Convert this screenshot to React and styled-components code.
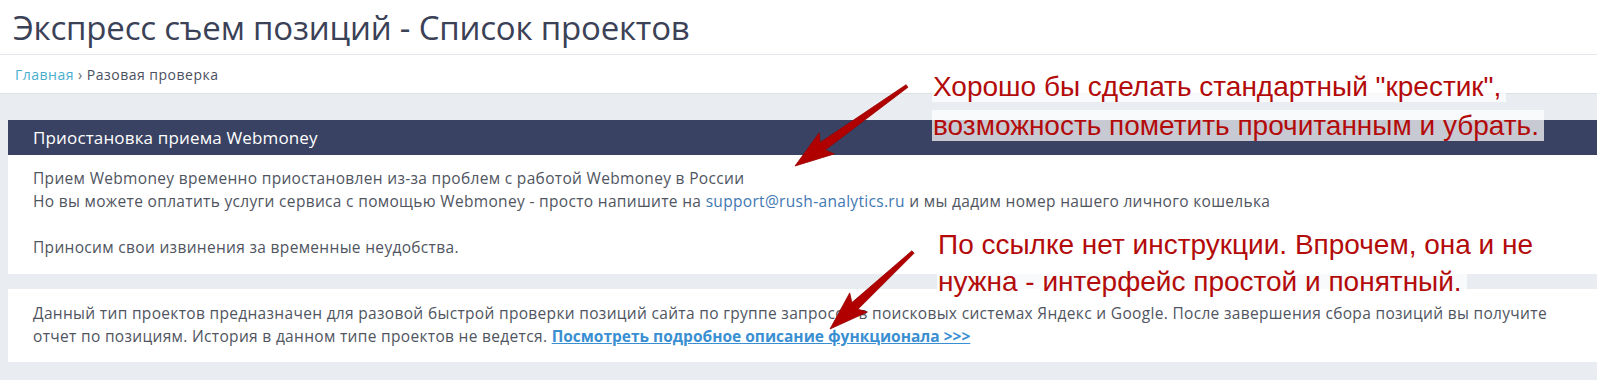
import React from 'react';
import styled, { createGlobalStyle } from 'styled-components';

const GlobalStyle = createGlobalStyle`
  body {
    margin: 0;
    background: #e9ecf1;
    font-family: 'Open Sans', 'Noto Sans', sans-serif;
    overflow: hidden;
  }
`;

const Page = styled.div`
  position: relative;
  width: 1597px;
  height: 380px;
  overflow: hidden;
`;

const TitleBar = styled.header`
  background: #fff;
  height: 54px;
  padding-left: 13px;
  border-bottom: 1px solid #e4e7eb;
  display: flex;
  align-items: center;
`;

const Title = styled.h1`
  margin: 0;
  font-size: 33px;
  font-weight: 400;
  color: #3b4156;
  letter-spacing: -0.2px;
`;

const Breadcrumbs = styled.nav`
  background: #fff;
  height: 38px;
  padding-left: 15px;
  display: flex;
  align-items: center;
  font-size: 14px;
  letter-spacing: 0.5px;
  color: #4b5060;
  border-bottom: 1px solid #dde1e6;
`;

const Crumb = styled.a`
  color: #48aed0;
  text-decoration: none;
`;

const Sep = styled.span`
  margin: 0 4px;
  color: #666;
`;

const Content = styled.main`
  padding: 26px 0 0 8px;
  display: flex;
  flex-direction: column;
  gap: 15px;
`;

const Card = styled.section`
  background: #fff;
`;

const CardHead = styled.div`
  background: #394262;
  color: #fff;
  height: 35px;
  padding-left: 25px;
  display: flex;
  align-items: center;
  font-size: 17px;
  letter-spacing: 0.15px;
`;

const CardBody = styled.div`
  padding: ${(p) => p.$pad || '12px 17px 15px 25px'};
  font-size: 15.5px;
  letter-spacing: 0.32px;
  line-height: 23px;
  color: #50555f;
`;

const Para = styled.p`
  margin: 0;
  max-width: ${(p) => p.$max || 'none'};
`;

const Gap = styled.div`
  height: 23px;
`;

const Mail = styled.a`
  color: #3f78b3;
  text-decoration: none;
`;

const MoreLink = styled.a`
  color: #3a8fd2;
  font-weight: 700;
  letter-spacing: 0;
  text-decoration: underline;
`;

const Note = styled.div`
  position: absolute;
  left: ${(p) => p.$x}px;
  top: ${(p) => p.$y}px;
  font-family: 'Liberation Sans', Arial, sans-serif;
  font-size: 28px;
  line-height: ${(p) => p.$lh}px;
  color: #b30a0a;
  white-space: nowrap;
`;

const Mark = styled.span`
  background: rgba(255, 255, 255, 0.72);
  padding: 0 5px 0 1px;
  box-decoration-break: clone;
  -webkit-box-decoration-break: clone;
`;

const Overlay = styled.svg`
  position: absolute;
  left: 0;
  top: 0;
  pointer-events: none;
`;

function arrowPoints(x1, y1, x2, y2, headLen = 34, headW = 13, neckW = 4.5, tailW = 1.6) {
  const dx = x2 - x1;
  const dy = y2 - y1;
  const len = Math.hypot(dx, dy);
  const ux = dx / len;
  const uy = dy / len;
  const nx = -uy;
  const ny = ux;
  const bx = x2 - ux * headLen;
  const by = y2 - uy * headLen;
  const pts = [
    [x1 + nx * tailW, y1 + ny * tailW],
    [bx + nx * neckW, by + ny * neckW],
    [bx + nx * headW - ux * 5, by + ny * headW - uy * 5],
    [x2, y2],
    [bx - nx * headW - ux * 5, by - ny * headW - uy * 5],
    [bx - nx * neckW, by - ny * neckW],
    [x1 - nx * tailW, y1 - ny * tailW],
  ];
  return pts.map((p) => p.map((v) => v.toFixed(1)).join(',')).join(' ');
}

const Arrow = ({ from, to }) => (
  <polygon
    points={arrowPoints(from[0], from[1], to[0], to[1])}
    fill="#b00000"
    stroke="#9a0000"
    strokeWidth="0.8"
    strokeLinejoin="round"
  />
);

export default function App() {
  return (
    <Page>
      <GlobalStyle />
      <TitleBar>
        <Title>Экспресс съем позиций - Список проектов</Title>
      </TitleBar>
      <Breadcrumbs>
        <Crumb href="#">Главная</Crumb>
        <Sep>›</Sep>
        <span>Разовая проверка</span>
      </Breadcrumbs>
      <Content>
        <Card>
          <CardHead>Приостановка приема Webmoney</CardHead>
          <CardBody>
            <Para>Прием Webmoney временно приостановлен из-за проблем с работой Webmoney в России</Para>
            <Para>
              Но вы можете оплатить услуги сервиса с помощью Webmoney - просто напишите на{' '}
              <Mail href="#">support@rush-analytics.ru</Mail> и мы дадим номер нашего личного кошелька
            </Para>
            <Gap />
            <Para>Приносим свои извинения за временные неудобства.</Para>
          </CardBody>
        </Card>
        <Card>
          <CardBody $pad="13px 17px 14px 25px">
            <Para $max="1525px">
              Данный тип проектов предназначен для разовой быстрой проверки позиций сайта по группе запросов в
              поисковых системах Яндекс и Google. После завершения сбора позиций вы получите отчет по позициям.
              История в данном типе проектов не ведется.{' '}
              <MoreLink href="#">Посмотреть подробное описание функционала &gt;&gt;&gt;</MoreLink>
            </Para>
          </CardBody>
        </Card>
      </Content>

      <Note $x={932} $y={67} $lh={39}>
        <Mark>
          Хорошо бы сделать стандартный "крестик",
          <br />
          возможность пометить прочитанным и убрать.
        </Mark>
      </Note>
      <Note $x={937} $y={226} $lh={37}>
        <Mark>
          По ссылке нет инструкции. Впрочем, она и не
          <br />
          нужна - интерфейс простой и понятный.
        </Mark>
      </Note>

      <Overlay width="1597" height="380">
        <Arrow from={[907, 86]} to={[795, 166]} />
        <Arrow from={[913, 252]} to={[830, 329]} />
      </Overlay>
    </Page>
  );
}
